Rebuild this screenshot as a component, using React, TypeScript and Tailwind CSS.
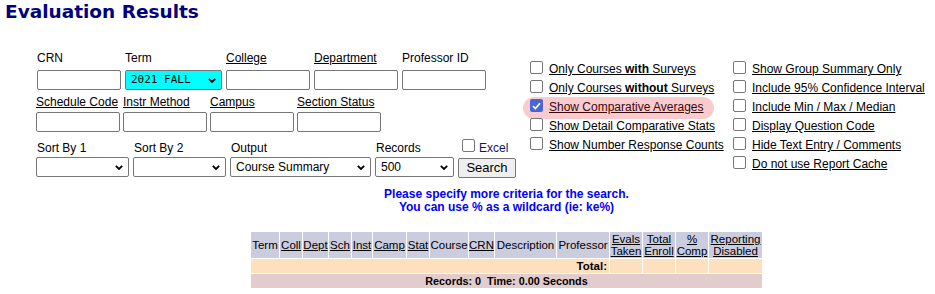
import React from "react";

function Chevron() {
  return (
    <svg width="8" height="5" viewBox="0 0 8 5" className="shrink-0">
      <path d="M0.8 0.8L4 4L7.2 0.8" fill="none" stroke="#000" strokeWidth="1.8" />
    </svg>
  );
}

function Box({ checked = false }: { checked?: boolean }) {
  if (checked) {
    return (
      <span className="flex h-[13px] w-[13px] shrink-0 items-center justify-center rounded-[2px] bg-[#4a66d2]">
        <svg width="9" height="8" viewBox="0 0 9 8">
          <path d="M1 4.2L3.4 6.5L8 1.2" fill="none" stroke="#fff" strokeWidth="1.7" />
        </svg>
      </span>
    );
  }
  return <span className="block h-[13px] w-[13px] shrink-0 rounded-[2px] border border-[#767676] bg-white" />;
}

function TextBox({ w }: { w: string }) {
  return <div className={`${w} h-[20px] rounded-[2px] border border-[#767676] bg-white`} />;
}

function Select({ w, value = "", mono = false, cyan = false }: { w: string; value?: string; mono?: boolean; cyan?: boolean }) {
  return (
    <div
      className={`${w} flex h-[20px] items-center justify-between rounded-[2px] border border-[#767676] pl-[5px] pr-[5px] ${
        cyan ? "bg-[#00ffff]" : "bg-white"
      }`}
    >
      <span className={mono ? "font-['DejaVu_Sans_Mono',monospace] text-[11px]" : "text-[12px]"}>{value}</span>
      <Chevron />
    </div>
  );
}

function Label({ text, link = false }: { text: string; link?: boolean }) {
  return <div className={`h-[16px] leading-[16px] whitespace-nowrap ${link ? "underline" : ""}`}>{text}</div>;
}

function Option({ children, checked = false }: { children: React.ReactNode; checked?: boolean }) {
  return (
    <div className="flex h-[19px] items-start">
      <span className="mt-[1px] block">
        <Box checked={checked} />
      </span>
      <span className="ml-[6px] whitespace-nowrap leading-[19px] underline">{children}</span>
    </div>
  );
}

const headers: { label: React.ReactNode; w: string; link?: boolean }[] = [
  { label: "Term", w: "w-[28px]" },
  { label: "Coll", w: "w-[22px]", link: true },
  { label: "Dept", w: "w-[25px]", link: true },
  { label: "Sch", w: "w-[22px]", link: true },
  { label: "Inst", w: "w-[20px]", link: true },
  { label: "Camp", w: "w-[33px]", link: true },
  { label: "Stat", w: "w-[22px]", link: true },
  { label: "Course", w: "w-[38px]" },
  { label: "CRN", w: "w-[25px]", link: true },
  { label: "Description", w: "w-[61px]" },
  { label: "Professor", w: "w-[52px]" },
  { label: <>Evals<br />Taken</>, w: "w-[32px]", link: true },
  { label: <>Total<br />Enroll</>, w: "w-[32px]", link: true },
  { label: <>%<br />Comp</>, w: "w-[32px]", link: true },
  { label: <>Reporting<br />Disabled</>, w: "w-[53px]", link: true },
];

export default function App() {
  return (
    <div className="h-[294px] w-[935px] overflow-hidden bg-white font-['Liberation_Sans',Arial,sans-serif] text-[12px] text-black">
      <h1 className="h-[24px] pl-[5px] pt-[1px] font-['DejaVu_Sans',Verdana,sans-serif] text-[18.5px] font-bold leading-[22px] text-[#000080]">
        Evaluation Results
      </h1>

      <div className="mt-[26px] flex">
        {/* search form */}
        <div className="w-[530px] shrink-0 pl-[36px]">
          <div className="ml-[1px] flex">
            <div className="w-[88px] shrink-0"><Label text="CRN" /><div className="mt-[4px]"><TextBox w="w-[84px]" /></div></div>
            <div className="w-[101px] shrink-0"><Label text="Term" /><div className="mt-[4px]"><Select w="w-[97px]" value="2021 FALL" mono cyan /></div></div>
            <div className="w-[88px] shrink-0"><Label text="College" link /><div className="mt-[4px]"><TextBox w="w-[84px]" /></div></div>
            <div className="w-[88px] shrink-0"><Label text="Department" link /><div className="mt-[4px]"><TextBox w="w-[84px]" /></div></div>
            <div className="w-[88px] shrink-0"><Label text="Professor ID" /><div className="mt-[4px]"><TextBox w="w-[84px]" /></div></div>
          </div>

          <div className="mt-[4px] flex">
            <div className="w-[87px] shrink-0"><Label text="Schedule Code" link /><div className="mt-[2px]"><TextBox w="w-[84px]" /></div></div>
            <div className="w-[87px] shrink-0"><Label text="Instr Method" link /><div className="mt-[2px]"><TextBox w="w-[84px]" /></div></div>
            <div className="w-[87px] shrink-0"><Label text="Campus" link /><div className="mt-[2px]"><TextBox w="w-[84px]" /></div></div>
            <div className="w-[87px] shrink-0"><Label text="Section Status" link /><div className="mt-[2px]"><TextBox w="w-[84px]" /></div></div>
          </div>

          <div className="mt-[8px] flex">
            <div className="w-[97px] shrink-0"><div className="pl-[1px]"><Label text="Sort By 1" /></div><div className="mt-[1px]"><Select w="w-[93px]" /></div></div>
            <div className="w-[97px] shrink-0"><div className="pl-[1px]"><Label text="Sort By 2" /></div><div className="mt-[1px]"><Select w="w-[93px]" /></div></div>
            <div className="w-[145px] shrink-0"><div className="pl-[1px]"><Label text="Output" /></div><div className="mt-[1px]"><Select w="w-[141px]" value="Course Summary" /></div></div>
            <div className="w-[83px] shrink-0"><div className="pl-[1px]"><Label text="Records" /></div><div className="mt-[1px]"><Select w="w-[79px]" value="500" /></div></div>
            <div className="w-[60px] shrink-0">
              <div className="flex h-[16px] items-start pl-[4px]">
                <span className="-mt-[1px] block"><Box /></span>
                <span className="ml-[4px] leading-[16px] text-[#14145e]">Excel</span>
              </div>
              <button className="mt-[2px] h-[20px] w-[58px] rounded-[2px] border border-[#767676] bg-[#efefef] text-[13px] leading-[18px]">
                Search
              </button>
            </div>
          </div>
        </div>

        {/* report options */}
        <div className="mt-[10px] w-[203px] shrink-0">
          <Option>Only Courses <b>with</b> Surveys</Option>
          <Option>Only Courses <b>without</b> Surveys</Option>
          <div className="-mb-[2px] -ml-[7px] -mt-[1px] w-fit rounded-[11px] bg-[#f9cbcf] pb-[2px] pl-[7px] pr-[10px] pt-[1px] text-[#3a0808]">
            <Option checked>Show Comparative Averages</Option>
          </div>
          <Option>Show Detail Comparative Stats</Option>
          <Option>Show Number Response Counts</Option>
        </div>
        <div className="mt-[10px] shrink-0">
          <Option>Show Group Summary Only</Option>
          <Option>Include 95% Confidence Interval</Option>
          <Option>Include Min / Max / Median</Option>
          <Option>Display Question Code</Option>
          <Option>Hide Text Entry / Comments</Option>
          <Option>Do not use Report Cache</Option>
        </div>
      </div>

      <div className="ml-[250px] w-[513px]">
        <div className="mt-[10px] text-center text-[12px] font-bold leading-[13px] text-[#0000ff]">
          <div>Please specify more criteria for the search.</div>
          <div>You can use % as a wildcard (ie: ke%)</div>
        </div>

        <table className="mt-[17px] table-fixed border-separate border-spacing-[1px] text-[11.5px]">
          <thead>
            <tr className="h-[26px] bg-[#ccccdf]">
              {headers.map((h, i) => (
                <th key={i} className={`${h.w} p-0 text-center font-normal leading-[12px] ${h.link ? "underline" : ""}`}>
                  {h.label}
                </th>
              ))}
            </tr>
          </thead>
          <tbody>
            <tr className="h-[14px] bg-[#fde0be]">
              <td colSpan={11} className="p-0 pr-[2px] text-right font-bold leading-[14px]">Total:</td>
              <td className="p-0" />
              <td className="p-0" />
              <td className="p-0" />
              <td className="p-0" />
            </tr>
            <tr className="h-[14px] bg-[#e2cccc]">
              <td colSpan={15} className="p-0 text-center text-[10.8px] font-bold leading-[14px]">
                Records: 0&nbsp; Time: 0.00 Seconds
              </td>
            </tr>
          </tbody>
        </table>
      </div>
    </div>
  );
}
